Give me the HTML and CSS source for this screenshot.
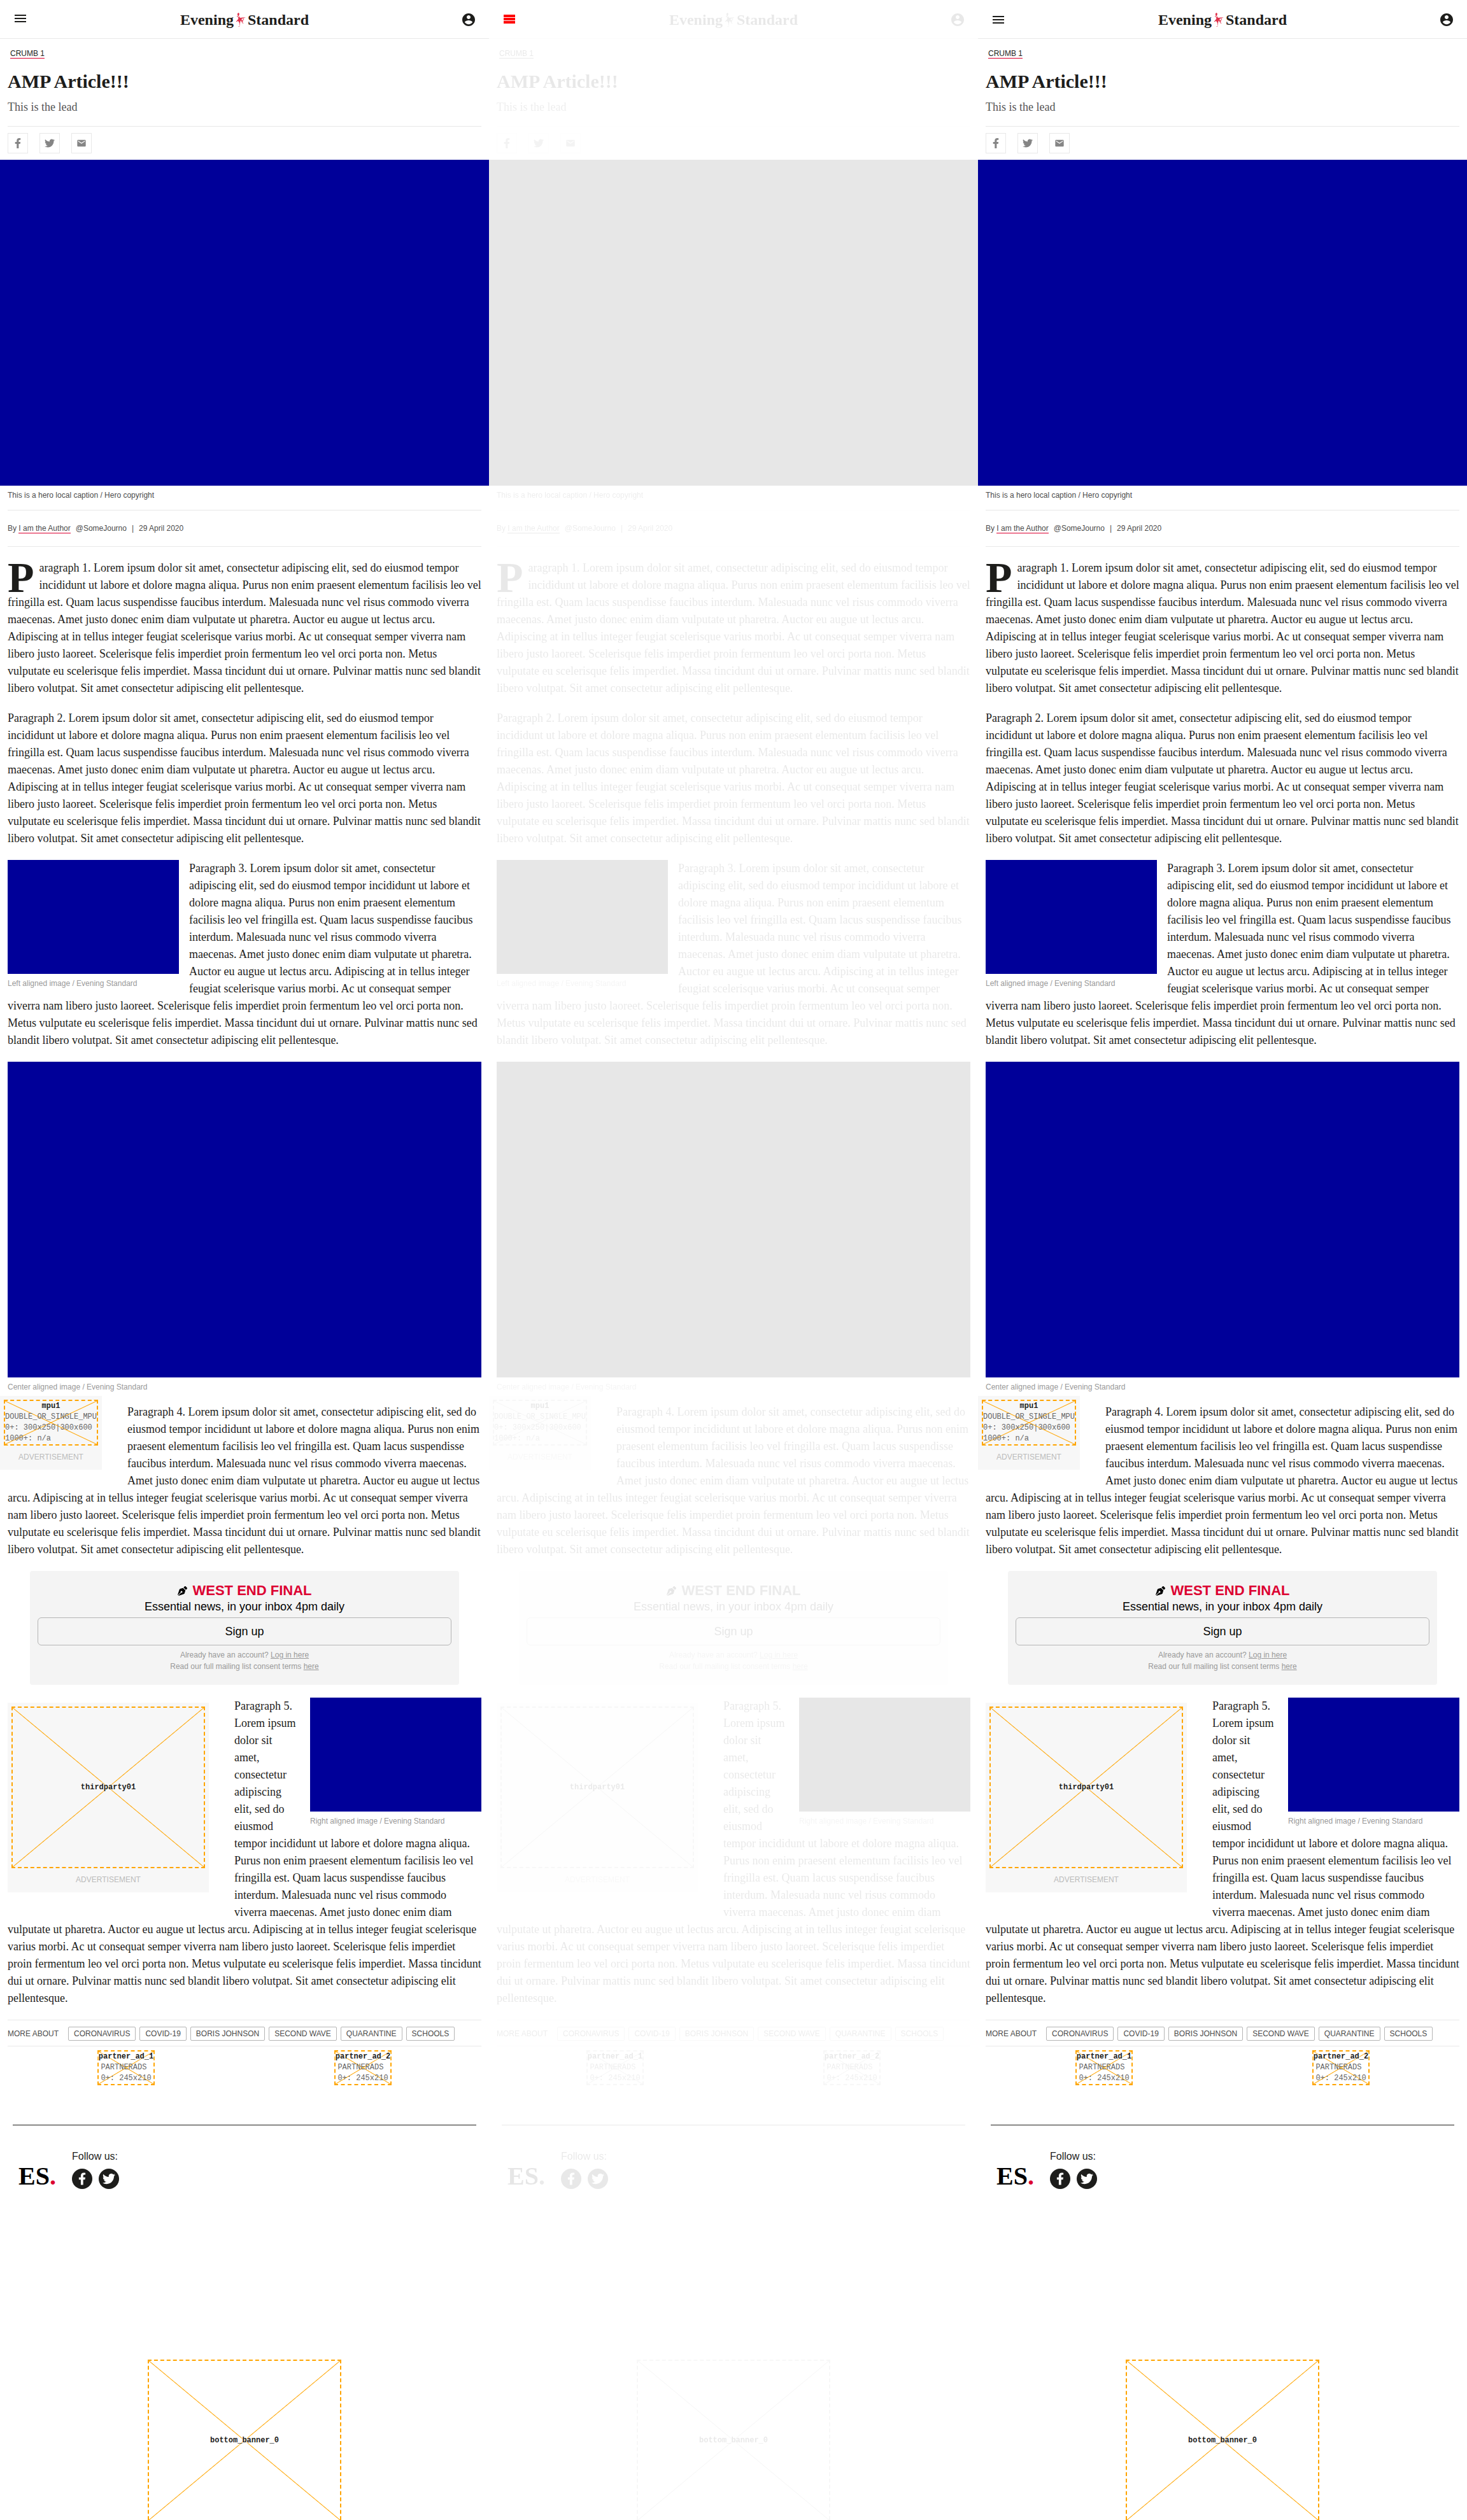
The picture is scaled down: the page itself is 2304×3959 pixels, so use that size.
FILE: index.html
```html
<!DOCTYPE html>
<html lang="en">
<head>
<meta charset="utf-8">
<title>AMP Article - Evening Standard</title>
<link rel="stylesheet" href="styles.css">
</head>
<body>
<main class="compare">
  <section class="snapshot before" aria-label="Before"></section>
  <section class="snapshot diff" aria-label="Difference"></section>
  <section class="snapshot after" aria-label="After"></section>
</main>

<template id="page">
  <header class="header">
    <button class="icon-button menu" type="button" aria-label="Menu">
      <svg width="24" height="24" viewBox="0 0 24 24"><rect class="bar" x="3" y="6" width="18" height="2"/><rect class="bar" x="3" y="11" width="18" height="2"/><rect class="bar" x="3" y="16" width="18" height="2"/></svg>
    </button>
    <a class="brand" href="#">Evening<svg class="statue" width="22" height="24" viewBox="0 0 18 24" aria-hidden="true"><path d="M6 1l1 2-1 3 2 3 9-1-7 3 3 4-4-2-1 4-1 6H5l2-1v-5l-2-3-3 1 3-4 1-4-2-2 0-3z"/><path class="thin" d="M3 6l4 4M8 11l5 7M14 10l-3 6M2 15l5-4"/></svg>Standard</a>
    <button class="icon-button account" type="button" aria-label="Account">
      <svg width="24" height="24" viewBox="0 0 24 24"><path d="M12 2C6.48 2 2 6.48 2 12s4.48 10 10 10 10-4.48 10-10S17.52 2 12 2zm0 3c1.66 0 3 1.34 3 3s-1.34 3-3 3-3-1.34-3-3 1.34-3 3-3zm0 14.2c-2.5 0-4.71-1.28-6-3.22.03-1.99 4-3.08 6-3.08 1.99 0 5.97 1.09 6 3.08-1.29 1.94-3.5 3.22-6 3.22z"/></svg>
    </button>
  </header>

  <article class="article">
    <nav class="crumbs"><a href="#">CRUMB 1</a></nav>
    <h1 class="headline">AMP Article!!!</h1>
    <p class="lead">This is the lead</p>
    <div class="share">
      <a href="#" aria-label="Share on Facebook"><svg width="10" height="16" viewBox="0 0 320 512"><path d="M279.14 288l14.22-92.66h-88.91v-60.13c0-25.35 12.42-50.06 52.24-50.06h40.42V6.26S260.43 0 225.36 0c-73.22 0-121.08 44.38-121.08 124.72v70.62H22.89V288h81.39v224h100.17V288z"/></svg></a>
      <a href="#" aria-label="Share on Twitter"><svg width="16" height="16" viewBox="0 0 24 24"><path d="M23.953 4.57a10 10 0 01-2.825.775 4.958 4.958 0 002.163-2.723c-.951.555-2.005.959-3.127 1.184a4.92 4.92 0 00-8.384 4.482C7.69 8.095 4.067 6.13 1.64 3.162a4.822 4.822 0 00-.666 2.475c0 1.71.87 3.213 2.188 4.096a4.904 4.904 0 01-2.228-.616v.06a4.923 4.923 0 003.946 4.827 4.996 4.996 0 01-2.212.085 4.936 4.936 0 004.604 3.417 9.867 9.867 0 01-6.102 2.105c-.39 0-.779-.023-1.17-.067a13.995 13.995 0 007.557 2.209c9.053 0 13.998-7.496 13.998-13.985 0-.21 0-.42-.015-.63A9.935 9.935 0 0024 4.59z"/></svg></a>
      <a href="#" aria-label="Share by email"><svg width="16" height="16" viewBox="0 0 24 24"><path d="M20 4H4c-1.1 0-2 .9-2 2v12c0 1.1.9 2 2 2h16c1.1 0 2-.9 2-2V6c0-1.1-.9-2-2-2zm0 4l-8 5-8-5V6l8 5 8-5v2z"/></svg></a>
    </div>

    <figure class="hero">
      <div class="image" role="img" aria-label="Hero"></div>
      <figcaption>This is a hero local caption / Hero copyright</figcaption>
    </figure>
    <div class="byline">By <a href="#">I am the Author</a><span class="handle">@SomeJourno</span><span class="divider">|</span><time datetime="2020-04-29">29 April 2020</time></div>

    <div class="body">
      <p><span class="drop-cap">P</span>aragraph 1. Lorem ipsum dolor sit amet, consectetur adipiscing elit, sed do eiusmod tempor incididunt ut labore et dolore magna aliqua. Purus non enim praesent elementum facilisis leo vel fringilla est. Quam lacus suspendisse faucibus interdum. Malesuada nunc vel risus commodo viverra maecenas. Amet justo donec enim diam vulputate ut pharetra. Auctor eu augue ut lectus arcu. Adipiscing at in tellus integer feugiat scelerisque varius morbi. Ac ut consequat semper viverra nam libero justo laoreet. Scelerisque felis imperdiet proin fermentum leo vel orci porta non. Metus vulputate eu scelerisque felis imperdiet. Massa tincidunt dui ut ornare. Pulvinar mattis nunc sed blandit libero volutpat. Sit amet consectetur adipiscing elit pellentesque.</p>

      <p>Paragraph 2. Lorem ipsum dolor sit amet, consectetur adipiscing elit, sed do eiusmod tempor incididunt ut labore et dolore magna aliqua. Purus non enim praesent elementum facilisis leo vel fringilla est. Quam lacus suspendisse faucibus interdum. Malesuada nunc vel risus commodo viverra maecenas. Amet justo donec enim diam vulputate ut pharetra. Auctor eu augue ut lectus arcu. Adipiscing at in tellus integer feugiat scelerisque varius morbi. Ac ut consequat semper viverra nam libero justo laoreet. Scelerisque felis imperdiet proin fermentum leo vel orci porta non. Metus vulputate eu scelerisque felis imperdiet. Massa tincidunt dui ut ornare. Pulvinar mattis nunc sed blandit libero volutpat. Sit amet consectetur adipiscing elit pellentesque.</p>

      <figure class="inset left">
        <div class="image" role="img" aria-label="Left aligned"></div>
        <figcaption>Left aligned image / Evening Standard</figcaption>
      </figure>
      <p>Paragraph 3. Lorem ipsum dolor sit amet, consectetur adipiscing elit, sed do eiusmod tempor incididunt ut labore et dolore magna aliqua. Purus non enim praesent elementum facilisis leo vel fringilla est. Quam lacus suspendisse faucibus interdum. Malesuada nunc vel risus commodo viverra maecenas. Amet justo donec enim diam vulputate ut pharetra. Auctor eu augue ut lectus arcu. Adipiscing at in tellus integer feugiat scelerisque varius morbi. Ac ut consequat semper viverra nam libero justo laoreet. Scelerisque felis imperdiet proin fermentum leo vel orci porta non. Metus vulputate eu scelerisque felis imperdiet. Massa tincidunt dui ut ornare. Pulvinar mattis nunc sed blandit libero volutpat. Sit amet consectetur adipiscing elit pellentesque.</p>

      <figure class="center">
        <div class="image" role="img" aria-label="Center aligned"></div>
        <figcaption>Center aligned image / Evening Standard</figcaption>
      </figure>

      <aside class="ad mpu">
        <div class="slot"><b>mpu1</b><div class="sizes">DOUBLE_OR_SINGLE_MPU<br>0+: 300x250|300x600<br>1000+: n/a</div></div>
        <div class="ad-label">ADVERTISEMENT</div>
      </aside>
      <p>Paragraph 4. Lorem ipsum dolor sit amet, consectetur adipiscing elit, sed do eiusmod tempor incididunt ut labore et dolore magna aliqua. Purus non enim praesent elementum facilisis leo vel fringilla est. Quam lacus suspendisse faucibus interdum. Malesuada nunc vel risus commodo viverra maecenas. Amet justo donec enim diam vulputate ut pharetra. Auctor eu augue ut lectus arcu. Adipiscing at in tellus integer feugiat scelerisque varius morbi. Ac ut consequat semper viverra nam libero justo laoreet. Scelerisque felis imperdiet proin fermentum leo vel orci porta non. Metus vulputate eu scelerisque felis imperdiet. Massa tincidunt dui ut ornare. Pulvinar mattis nunc sed blandit libero volutpat. Sit amet consectetur adipiscing elit pellentesque.</p>

      <section class="signup">
        <h2><svg width="15" height="15" viewBox="0 0 512 512" aria-hidden="true"><path d="M136.6 138.79a64.003 64.003 0 0 0-43.31 41.35L0 460l14.69 14.69L164.8 324.58c-2.99-6.26-4.8-13.18-4.8-20.58 0-26.51 21.49-48 48-48s48 21.49 48 48-21.49 48-48 48c-7.4 0-14.32-1.81-20.58-4.8L37.31 497.31 52 512l279.86-93.29a64.003 64.003 0 0 0 41.35-43.31L416 224 288 96l-151.4 42.79zm361.34-64.62l-60.11-60.11c-18.75-18.75-49.16-18.75-67.91 0l-56.55 56.55 128.02 128.02 56.55-56.55c18.75-18.75 18.75-49.15 0-67.91z"/></svg>WEST END FINAL</h2>
        <p class="pitch">Essential news, in your inbox 4pm daily</p>
        <button type="button">Sign up</button>
        <p class="note">Already have an account? <a href="#">Log in here</a></p>
        <p class="note">Read our full mailing list consent terms <a href="#">here</a></p>
      </section>

      <aside class="ad thirdparty">
        <div class="slot"><b>thirdparty01</b></div>
        <div class="ad-label">ADVERTISEMENT</div>
      </aside>
      <figure class="inset right">
        <div class="image" role="img" aria-label="Right aligned"></div>
        <figcaption>Right aligned image / Evening Standard</figcaption>
      </figure>
      <p>Paragraph 5. Lorem ipsum dolor sit amet, consectetur adipiscing elit, sed do eiusmod tempor incididunt ut labore et dolore magna aliqua. Purus non enim praesent elementum facilisis leo vel fringilla est. Quam lacus suspendisse faucibus interdum. Malesuada nunc vel risus commodo viverra maecenas. Amet justo donec enim diam vulputate ut pharetra. Auctor eu augue ut lectus arcu. Adipiscing at in tellus integer feugiat scelerisque varius morbi. Ac ut consequat semper viverra nam libero justo laoreet. Scelerisque felis imperdiet proin fermentum leo vel orci porta non. Metus vulputate eu scelerisque felis imperdiet. Massa tincidunt dui ut ornare. Pulvinar mattis nunc sed blandit libero volutpat. Sit amet consectetur adipiscing elit pellentesque.</p>
    </div>

    <nav class="topics">
      <span class="topics-label">MORE ABOUT</span>
      <a href="#">CORONAVIRUS</a>
      <a href="#">COVID-19</a>
      <a href="#">BORIS JOHNSON</a>
      <a href="#">SECOND WAVE</a>
      <a href="#">QUARANTINE</a>
      <a href="#">SCHOOLS</a>
    </nav>

    <div class="partners">
      <div class="slot"><b>partner_ad_1</b><div class="sizes">PARTNERADS<br>0+: 245x210</div></div>
      <div class="slot"><b>partner_ad_2</b><div class="sizes">PARTNERADS<br>0+: 245x210</div></div>
    </div>
  </article>

  <footer class="footer">
    <div class="footer-top">
      <a class="es" href="#">ES<span>.</span></a>
      <div>
        <div class="follow-label">Follow us:</div>
        <div class="follow">
          <a href="#" aria-label="Facebook"><svg width="12" height="20" viewBox="0 0 320 512"><path d="M279.14 288l14.22-92.66h-88.91v-60.13c0-25.35 12.42-50.06 52.24-50.06h40.42V6.26S260.43 0 225.36 0c-73.22 0-121.08 44.38-121.08 124.72v70.62H22.89V288h81.39v224h100.17V288z"/></svg></a>
          <a href="#" aria-label="Twitter"><svg width="20" height="20" viewBox="0 0 24 24"><path d="M23.953 4.57a10 10 0 01-2.825.775 4.958 4.958 0 002.163-2.723c-.951.555-2.005.959-3.127 1.184a4.92 4.92 0 00-8.384 4.482C7.69 8.095 4.067 6.13 1.64 3.162a4.822 4.822 0 00-.666 2.475c0 1.71.87 3.213 2.188 4.096a4.904 4.904 0 01-2.228-.616v.06a4.923 4.923 0 003.946 4.827 4.996 4.996 0 01-2.212.085 4.936 4.936 0 004.604 3.417 9.867 9.867 0 01-6.102 2.105c-.39 0-.779-.023-1.17-.067a13.995 13.995 0 007.557 2.209c9.053 0 13.998-7.496 13.998-13.985 0-.21 0-.42-.015-.63A9.935 9.935 0 0024 4.59z"/></svg></a>
        </div>
      </div>
    </div>
    <div class="slot banner"><b>bottom_banner_0</b></div>
  </footer>
</template>
<script src="script.js"></script>
</body>
</html>
```

FILE: script.js
```js
// Each snapshot shows the same article page.
const page = document.getElementById('page');
document.querySelectorAll('.snapshot').forEach((snapshot) => {
  snapshot.append(page.content.cloneNode(true));
});
```

FILE: styles.css
```css
* {
  box-sizing: border-box;
}

body {
  margin: 0;
  background: #fff;
  color: #1d1d1b;
  font: 12px/18px "Liberation Sans", Arial, sans-serif;
}

a {
  color: inherit;
  text-decoration: none;
}

p,
h1,
h2,
figure {
  margin: 0;
}

svg {
  display: block;
  fill: currentColor;
}

.compare {
  display: flex;
}

.snapshot {
  flex: 1;
  min-width: 0;
}

/* Header */
.header {
  display: flex;
  align-items: center;
  justify-content: space-between;
  height: 61px;
  padding: 2px 20px 0;
  border-bottom: 1px solid #e8e8e8;
}

.icon-button {
  padding: 0;
  border: 0;
  background: none;
  color: inherit;
}

.before .menu,
.diff .menu {
  margin-bottom: 4px;
}

.brand {
  display: flex;
  align-items: center;
  font: bold 24px/24px "Liberation Serif", "Times New Roman", serif;
}

.statue {
  fill: #e0334d;
}

.statue .thin {
  fill: none;
  stroke: #e0334d;
}

/* Article head */
.article {
  padding: 14px 12px 0;
}

.crumbs {
  padding: 0 4px;
}

.crumbs a,
.byline a {
  border-bottom: 1px solid #dc0031;
}

.headline {
  margin-top: 17px;
  font: bold 30px/36px "Liberation Serif", "Times New Roman", serif;
}

.lead {
  margin: 9px 0 16px;
  color: #555;
  font: 18px/27px "Liberation Serif", "Times New Roman", serif;
}

.share {
  display: flex;
  gap: 18px;
  padding: 10px 0;
  border-top: 1px solid #e8e8e8;
}

.share a {
  display: flex;
  align-items: center;
  justify-content: center;
  width: 32px;
  height: 32px;
  border: 1px solid #e8e8e8;
  color: #858585;
}

.image {
  aspect-ratio: 3 / 2;
  background: #000099;
}

figcaption {
  padding-top: 6px;
  color: #999;
}

.hero .image {
  margin: 0 -12px;
}

.hero figcaption {
  padding-bottom: 14px;
  border-bottom: 1px solid #e8e8e8;
  color: #4c4c4c;
}

.byline {
  padding: 19px 0;
  border-bottom: 1px solid #e8e8e8;
  color: #4c4c4c;
}

.handle {
  margin-left: 8px;
}

.divider {
  margin: 0 8px;
}

/* Article body */
.body {
  padding: 20px 0;
}

.body > p {
  margin-bottom: 20px;
  font: 18px/27px "Liberation Serif", "Times New Roman", serif;
}

.body > p:last-child {
  margin-bottom: 0;
}

.drop-cap {
  float: left;
  margin: 2px 8px 0 0;
  font-size: 68px;
  font-weight: bold;
  line-height: 52px;
}

.inset {
  width: 269px;
}

.left {
  float: left;
  margin-right: 16px;
}

.right {
  float: right;
  margin-left: 16px;
}

.center {
  margin-bottom: 17px;
}

/* Ad slots */
.slot {
  display: flex;
  flex-direction: column;
  align-items: center;
  justify-content: center;
  border: 2px dashed #ffa500;
  background:
    linear-gradient(to top right, transparent calc(50% - 1px), #ffa500, transparent calc(50% + 1px)),
    linear-gradient(to bottom right, transparent calc(50% - 1px), #ffa500, transparent calc(50% + 1px));
  font: 12px/17px "Liberation Mono", "Courier New", monospace;
}

.slot b {
  text-shadow: 0 0 4px #fff, 0 0 4px #fff;
}

.sizes {
  color: #666;
}

.ad {
  float: left;
  padding: 6px 6px 11px;
  background: #f7f7f7;
}

.ad-label {
  padding-top: 9px;
  color: #bbb;
  text-align: center;
}

.mpu {
  margin: -12px 40px 20px -12px;
}

.thirdparty {
  margin: 8px 40px 20px 0;
}

.thirdparty .slot {
  width: 304px;
  height: 254px;
}

/* Newsletter */
.signup {
  margin: 0 35px 20px;
  padding: 18px 12px 20px;
  border-radius: 4px;
  background: #f4f4f4;
  color: #999;
  text-align: center;
}

.signup h2 {
  display: flex;
  align-items: center;
  justify-content: center;
  gap: 9px;
  color: #dc0031;
  font-size: 22px;
  line-height: 26px;
}

.signup svg {
  fill: #000;
}

.pitch {
  color: #000;
  font-size: 18px;
  line-height: 24px;
}

.signup button {
  display: block;
  width: 100%;
  height: 44px;
  margin: 5px 0 6px;
  border: 1px solid #b5b5b5;
  border-radius: 6px;
  background: none;
  color: #000;
  font: inherit;
  font-size: 18px;
}

.note a {
  text-decoration: underline;
}

/* Topics */
.topics {
  display: flex;
  align-items: center;
  gap: 6px;
  padding: 10px 0 8px;
  border: solid #e8e8e8;
  border-width: 1px 0;
  color: #4c4c4c;
  white-space: nowrap;
}

.topics-label {
  flex-basis: 89px;
}

.topics a {
  padding: 1px 8px;
  border: 1px solid #b5b5b5;
  border-radius: 2px;
}

.partners {
  display: grid;
  grid-template-columns: 1fr 1fr;
  justify-items: center;
  padding: 6px 0 62px;
}

/* Footer */
.footer-top {
  display: flex;
  align-items: flex-end;
  gap: 24px;
  margin: 0 20px;
  padding: 37px 9px 0;
  border-top: 1px solid #1d1d1b;
}

.es {
  flex-basis: 60px;
  color: #000;
  font: bold 40px/40px "Liberation Serif", "Times New Roman", serif;
}

.es span {
  color: #dc0031;
}

.follow-label {
  font-size: 16px;
  line-height: 24px;
}

.follow {
  display: flex;
  gap: 10px;
  margin-top: 7px;
}

.follow a {
  display: flex;
  align-items: center;
  justify-content: center;
  width: 32px;
  height: 32px;
  border-radius: 50%;
  background: #1d1d1b;
  color: #fff;
}

.banner {
  width: 304px;
  height: 252px;
  margin: 268px auto 0;
  border-bottom: 0;
}

/* Difference view: unchanged content is faded, changed content is red */
.diff .brand,
.diff .account,
.diff .article,
.diff .footer {
  filter: grayscale(1) opacity(0.1);
}

.diff .header {
  border-bottom-color: #fcfcfc;
}

.diff .bar {
  height: 4px;
  fill: #f00;
}
```
